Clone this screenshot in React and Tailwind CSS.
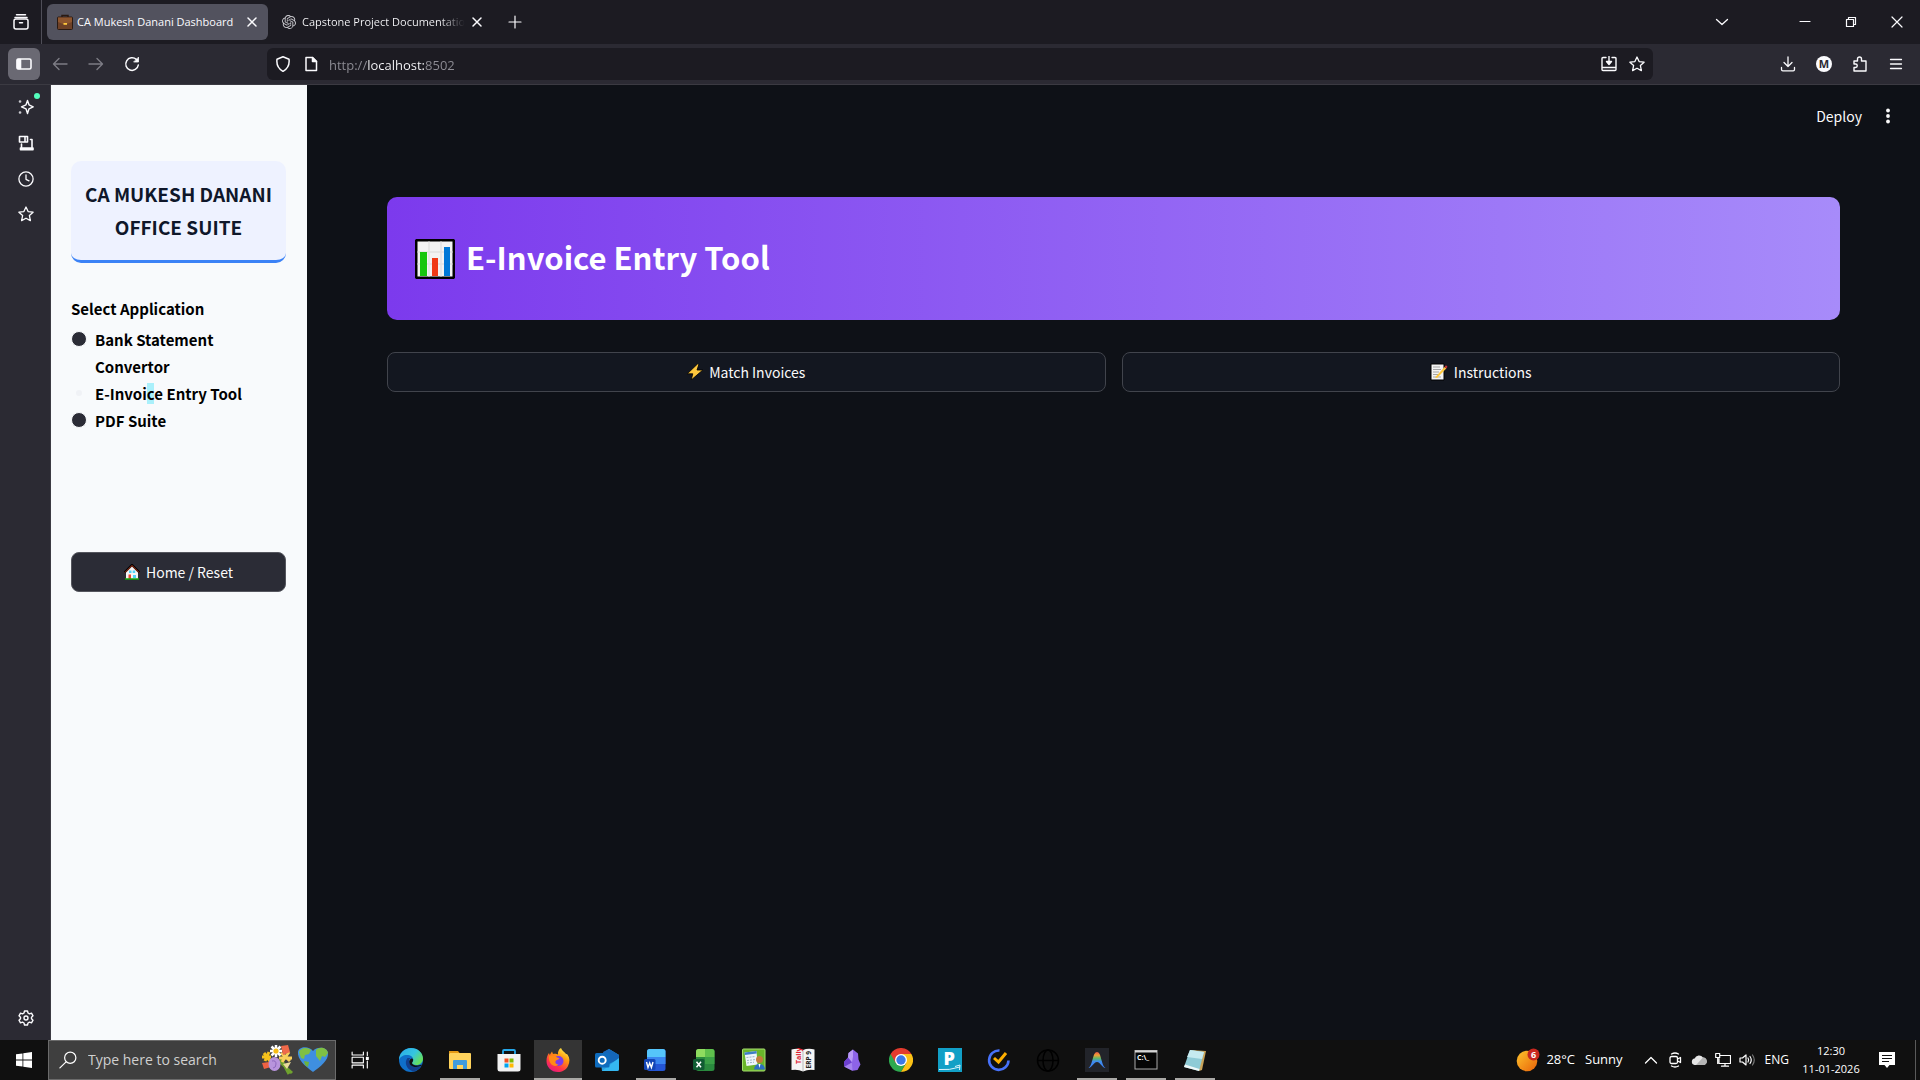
import React, { useState } from "react";
import { SiOpenai } from "react-icons/si";

// Thin 16px line icon used all over the browser chrome
const Line = ({ d, className = "size-4", width = 1.2, children }) => (
  <svg
    viewBox="0 0 16 16"
    fill="none"
    stroke="currentColor"
    strokeWidth={width}
    strokeLinecap="round"
    strokeLinejoin="round"
    className={`shrink-0 ${className}`}
    aria-hidden="true"
  >
    {d && <path d={d} />}
    {children}
  </svg>
);

const STAR = "M8 1l2.1 4.6 5 .6-3.7 3.4 1 5L8 12.2l-4.4 2.4 1-5L.9 6.2l5-.6z";
const CLOSE = "M4 4l8 8M12 4l-8 8";

/* ---------- page pictograms ---------- */

const ChartIcon = () => (
  <svg viewBox="0 0 40 40" className="size-10 shrink-0" aria-hidden="true">
    <rect x="1.2" y="1.2" width="37.6" height="37.6" rx="1" fill="#f3f3f3" stroke="#000" strokeWidth="2.6" />
    <path d="M2.5 13h35M2.5 25h35M14 2.5v35M26 2.5v35" stroke="#e2e2e2" strokeWidth="1.5" />
    <rect x="5" y="13" width="7" height="24" fill="#16c60c" />
    <rect x="17" y="19" width="6" height="18" fill="#f03a17" />
    <rect x="29" y="8" width="6" height="29" fill="#0078d7" />
  </svg>
);

const BoltIcon = () => (
  <svg viewBox="0 0 16 16" className="size-4 shrink-0" aria-hidden="true">
    <path d="M10.5 0L.3 9.8h5.5L4.2 16 15.8 6H10L12 0z" fill="#ffc83d" stroke="#000" strokeWidth=".8" />
  </svg>
);

const MemoIcon = () => (
  <svg viewBox="0 0 18 18" className="size-[18px] shrink-0" aria-hidden="true">
    <path d="M1 1h13v16H1z" fill="#f4f4f4" stroke="#000" />
    <path d="M3 4h7M3 6.5h8M3 9h6M3 11.5h5M3 14h8" stroke="#a5a5a5" strokeWidth="1" />
    <path d="M5 14.5L14.5 4l1.8 1.4L7 15z" fill="#ffc83d" />
    <path d="M14.5 4l1.5-1.7 1.5 1.5-1.2 1.6z" fill="#d13438" />
  </svg>
);

const HouseIcon = () => (
  <svg viewBox="0 0 16 16" className="size-4 shrink-0" aria-hidden="true">
    <path d="M2 8l6-6 6 6v7H2z" fill="#f4f4f4" />
    <path d="M.5 8.500L8 1l7.500 7.500" fill="none" stroke="#000" strokeWidth="2.2" />
    <path d="M1 8.500L8 1.500l7 7" fill="none" stroke="#c8401f" strokeWidth="1" />
    <rect x="5" y="6.500" width="2.500" height="2.500" fill="#4fd2f5" />
    <rect x="8.700" y="6.500" width="2.500" height="2.500" fill="#4fd2f5" />
    <rect x="4.500" y="10.500" width="2.500" height="4.500" fill="#e8452c" />
    <rect x="9" y="11" width="3" height="3" fill="#4fd2f5" />
    <path d="M1 15h14" stroke="#16a60c" strokeWidth="1.5" />
  </svg>
);

const BriefcaseIcon = () => (
  <svg viewBox="0 0 16 16" className="size-4 shrink-0" aria-hidden="true">
    <path d="M5 4V1.5h6V4" fill="none" stroke="#2a1a12" strokeWidth="1.5" />
    <rect x=".5" y="3" width="15" height="12.5" rx="1" fill="#6e4127" stroke="#2a1a12" />
    <path d="M1 3.5h14V8l-5 2H6L1 8z" fill="#8e562e" />
    <rect x="6.5" y="9" width="3.5" height="1.8" fill="#ffc83d" />
  </svg>
);

/* ---------- browser ---------- */

function TabBar() {
  return (
    <header className="flex h-11 items-center bg-[#1c1b22] text-[#fbfbfe]">
      <button aria-label="View tabs" className="flex h-11 w-[42px] items-center justify-center border-r border-[#4f4e58]">
        <Line width={1.5}>
          <path d="M3.5 .8h9M2 3.6h12" />
          <rect x="1" y="5" width="14" height="10" rx="2" />
          <path d="M6.5 8.8h3" />
        </Line>
      </button>
      <div className="ml-[5px] flex h-9 w-[221px] items-center rounded-md bg-[#52525e] pr-1 pl-2.5">
        <BriefcaseIcon />
        <span className="ml-1 flex-1 text-[11px] leading-5 whitespace-nowrap">CA Mukesh Danani Dashboard</span>
        <button aria-label="Close tab" className="flex size-6 items-center justify-center">
          <Line d={CLOSE} width={1.5} />
        </button>
      </div>
      <div className="ml-1 flex h-9 w-[221px] items-center pr-1 pl-2.5">
        <SiOpenai className="size-3.5 shrink-0 text-[#c9c9ce]" />
        <span className="ml-1.5 flex-1 overflow-hidden bg-gradient-to-r from-[#fbfbfe] from-85% to-[#1c1b22] bg-clip-text text-[11px] leading-5 whitespace-nowrap text-transparent">
          Capstone Project Documentation
        </span>
        <button aria-label="Close tab" className="flex size-6 items-center justify-center">
          <Line d={CLOSE} width={1.5} />
        </button>
      </div>
      <button aria-label="New tab" className="ml-1 flex size-9 items-center justify-center">
        <Line d="M8 2v12M2 8h12" />
      </button>
      <div className="ml-auto flex">
        <button aria-label="List all tabs" className="mr-9 flex h-11 w-12 items-center justify-center">
          <Line d="M2.5 5.5L8 10.5l5.500-5" width={1.3} />
        </button>
        <button aria-label="Minimize" className="flex h-11 w-[46px] items-center justify-center">
          <Line d="M3 7.5h10" />
        </button>
        <button aria-label="Restore" className="flex h-11 w-[46px] items-center justify-center">
          <Line d="M3.5 5.5h7v7h-7zM5.5 5V3.5h7v7h-1.5" />
        </button>
        <button aria-label="Close window" className="flex h-11 w-[46px] items-center justify-center">
          <Line d="M3 3l10 10M13 3L3 13" />
        </button>
      </div>
    </header>
  );
}

function Toolbar() {
  const [url, setUrl] = useState("http://localhost:8502");

  return (
    <div className="flex h-[41px] items-center border-b border-[#3b3a42] bg-[#2b2a33] px-2 text-[#fbfbfe]">
      <button aria-label="Show sidebar" className="flex size-8 items-center justify-center rounded-md bg-[#6a6973]">
        <Line width={1.6}>
          <rect x="1" y="3" width="14" height="10" rx="1.5" />
          <path d="M1.5 3.5h3v9h-3z" fill="currentColor" />
        </Line>
      </button>
      <div className="ml-1 flex gap-1">
        <button aria-label="Back" disabled className="flex size-8 items-center justify-center text-[#7d7c85]">
          <Line d="M15 8H1.5M7 2.5L1.5 8 7 13.5" width={1.4} />
        </button>
        <button aria-label="Forward" disabled className="flex size-8 items-center justify-center text-[#7d7c85]">
          <Line d="M1 8h13.5M9 2.5L14.5 8 9 13.5" width={1.4} />
        </button>
        <button aria-label="Reload" className="flex size-8 items-center justify-center">
          <Line width={1.5}>
            <path d="M12.300 3.400A6.300 6.300 0 1 0 14.300 9" />
            <path d="M14.500 1.500v4.500H10z" fill="currentColor" strokeWidth=".8" />
          </Line>
        </button>
      </div>
      <div className="ml-[119px] flex h-8 flex-1 items-center rounded-md bg-[#1c1b22] px-2">
        <Line d="M8 .8l6 2.4c.7 5.5-1 9.5-6 12.2C3 12.7 1.300 8.700 2 3.200z" width={1.5} />
        <Line className="ml-3 size-4" width={1.5}>
          <path d="M3 1.5h6.5L13.5 5.5V14.5H3z" />
          <path d="M9.5 1.5v4h4z" fill="currentColor" />
        </Line>
        {/* the host is brighter than the rest of the address */}
        <input
          aria-label="Address"
          value={url}
          onChange={(e) => setUrl(e.target.value)}
          className="ml-2.5 h-6 flex-1 bg-[linear-gradient(90deg,#8f8e96_38px,#fbfbfe_38px,#fbfbfe_96px,#8f8e96_96px)] bg-clip-text pt-0.5 text-[13px] text-transparent caret-white outline-none"
        />
        <Line className="mr-3 size-4" width={1.4}>
          <path d="M5 1.5H2q-1 0-1 1V13.5q0 1 1 1h12q1 0 1-1V2.5q0-1-1-1h-3M1 11.5h14M8 .5v6" />
          <path d="M5.500 5.500h5L8 8.500z" fill="currentColor" />
        </Line>
        <Line d={STAR} width={1.3} />
      </div>
      <div className="ml-[119px] flex gap-1">
        <button aria-label="Downloads" className="flex size-8 items-center justify-center">
          <Line d="M8 1v9.5M4 6.5l4 4 4-4M1.5 11.5v2q0 1.300 1.300 1.300h10.400q1.300 0 1.300-1.300v-2" width={1.3} />
        </button>
        <button aria-label="Account" className="flex size-8 items-center justify-center">
          <span className="flex size-4 items-center justify-center rounded-full bg-[#fbfbfe] text-[11px] font-bold text-[#2b2a33]">M</span>
        </button>
        <button aria-label="Extensions" className="flex size-8 items-center justify-center">
          <Line d="M2 5h3.5V3a2 2 0 0 1 4 0v2H14v10H2v-3.500h1.500a1.700 1.700 0 0 0 0-3.500H2z" width={1.4} />
        </button>
        <button aria-label="Menu" className="flex size-8 items-center justify-center">
          <Line d="M2.5 3.5h11M2.5 8h11M2.5 12.5h11" width={1.3} />
        </button>
      </div>
    </div>
  );
}

function ToolStrip() {
  return (
    <nav className="flex w-[51px] shrink-0 flex-col items-center border-r border-[#3b3a42] bg-[#2b2a33] pt-1 pb-1.5 pl-0.5 text-[#fbfbfe]">
      <button aria-label="AI chatbot" className="relative flex h-9 w-9 items-center justify-center">
        <Line width={1.4}>
          <path d="M9.5 1.5l1.5 4.300 4.200 2-4.200 2L9.500 14.500 8 9.800l-4.500-2L8 5.800z" />
          <path d="M2 2.5h.1M2 13.5h.1" strokeWidth="2.600" stroke="#c9c9ce" />
        </Line>
        <span className="absolute top-1 right-1 size-1.5 rounded-full bg-[#54ffbd]"></span>
      </button>
      <button aria-label="Synced tabs" className="flex h-9 w-9 items-center justify-center">
        <Line width={1.6}>
          <path d="M1.5 1.5h8v5.500h-8zM7 1.5v5M3.500 9v3.500M12.500 4.500h1.500v8" />
          <path d="M2.5 13h12.5v1.800H2.500z" fill="currentColor" />
        </Line>
      </button>
      <button aria-label="History" className="flex h-[35px] w-9 items-center justify-center">
        <Line width={1.3}>
          <circle cx="8" cy="8" r="7.1" />
          <path d="M8 4v4.300l3 1.500" />
        </Line>
      </button>
      <button aria-label="Bookmarks" className="flex h-[35px] w-9 items-center justify-center">
        <Line d={STAR} width={1.3} />
      </button>
      <button aria-label="Customize sidebar" className="mt-auto flex size-8 items-center justify-center">
        <Line width={1.4}>
          <path d="M6.5 1h3l.5 2 1.500.9 2-.7 1.500 2.600-1.500 1.400v1.600l1.500 1.400-1.500 2.600-2-.7-1.500.9-.5 2h-3L6 13l-1.500-.9-2 .7L1 10.200l1.500-1.400V7.200L1 5.800l1.500-2.600 2 .7L6 3z" />
          <circle cx="8" cy="8" r="2" />
        </Line>
      </button>
    </nav>
  );
}

/* ---------- streamlit page ---------- */

const apps = [
  { id: "bank", label: "Bank Statement Convertor" },
  {
    id: "einvoice",
    label: (
      <>
        E-Invoi<span className="bg-[#aaf0fb]">c</span>e Entry Tool
      </>
    ),
  },
  { id: "pdf", label: "PDF Suite" },
];

function AppSidebar() {
  const [selected, setSelected] = useState("einvoice");

  return (
    <aside className="w-64 shrink-0 bg-[#f8fafc] pt-19 pr-[21px] pl-5">
      <h2 className="rounded-[10px] border-b-[3px] border-[#3b82f6] bg-[#eef2ff] px-2 pt-4 pb-[17px] text-center text-[19px] leading-[33px] font-bold text-[#0f172a]">
        CA MUKESH DANANI OFFICE SUITE
      </h2>
      <fieldset className="mt-8 text-[15px] leading-[27px] font-bold text-black">
        <legend className="mb-1">Select Application</legend>
        {apps.map((app) => (
          <label key={app.id} className="flex items-start gap-2">
            <input
              type="radio"
              name="application"
              checked={selected === app.id}
              onChange={() => setSelected(app.id)}
              className="mt-[5px] size-4 shrink-0 appearance-none rounded-full border border-[#f8fafc] bg-[#2b2c36] checked:border-5 checked:bg-[#f0f2f6]"
            />
            <span>{app.label}</span>
          </label>
        ))}
      </fieldset>
      <button
        onClick={() => setSelected("bank")}
        className="mt-[118px] flex h-10 w-full items-center justify-center gap-1.5 rounded-lg border border-[#55565e] bg-[#2b2c36] text-sm text-[#fafafa]"
      >
        <HouseIcon />
        Home / Reset
      </button>
    </aside>
  );
}

function AppMain() {
  return (
    <main className="flex-1 bg-[#0e1117] px-20 text-[#fafafa]">
      <div className="-mr-15 flex h-[62px] items-center justify-end gap-3.5">
        <button className="text-sm">Deploy</button>
        <button aria-label="More options" className="flex size-6 items-center justify-center">
          <svg viewBox="0 0 16 16" fill="currentColor" className="size-4" aria-hidden="true">
            <circle cx="8" cy="2.5" r="1.9" />
            <circle cx="8" cy="8" r="1.9" />
            <circle cx="8" cy="13.5" r="1.9" />
          </svg>
        </button>
      </div>
      <div className="mt-[50px] flex h-[123px] items-center gap-[11px] rounded-[10px] bg-[linear-gradient(90deg,#7c3aed,#a78bfa)] px-7">
        <ChartIcon />
        <h1 className="pb-1 text-[31px] leading-10 font-semibold text-white">E-Invoice Entry Tool</h1>
      </div>
      <div className="mt-8 grid grid-cols-2 gap-4">
        <button className="flex h-10 items-center justify-center gap-1.5 rounded-lg border border-[#41444c] bg-[#131720] text-sm">
          <BoltIcon />
          Match Invoices
        </button>
        <button className="flex h-10 items-center justify-center gap-1.5 rounded-lg border border-[#41444c] bg-[#131720] text-sm">
          <MemoIcon />
          Instructions
        </button>
      </div>
    </main>
  );
}

/* ---------- taskbar ---------- */

const Logo = ({ children }) => (
  <svg viewBox="0 0 24 24" className="size-6" aria-hidden="true">
    {children}
  </svg>
);

const EdgeLogo = () => (
  <Logo>
    <defs>
      <linearGradient id="edgeTop" x1="0" y1="0" x2="1" y2=".6">
        <stop offset="0" stopColor="#2aa9e8" />
        <stop offset=".6" stopColor="#35c5e0" />
        <stop offset="1" stopColor="#66e05a" />
      </linearGradient>
    </defs>
    <circle cx="12" cy="12" r="12" fill="#0f6fc9" />
    <path d="M0 12C0 5 5.5 0 12 0c7 0 12 5 12 10.5 0 4-3 6.5-6.5 6.5-3 0-4.5-1-4.5-2 0-.8 1.2-1.2 1.2-3.2C14.2 9 11.5 7 8 7c-4 0-7 2-8 5z" fill="url(#edgeTop)" />
    <path d="M8.5 10C5 14 7 21 14 23.5c4-.6 7-3 8.5-6-6 3-12 1-12.500-4-.1-1.500.3-2.500 1.500-3.500z" fill="#123f8c" />
    <path d="M12.5 10.5c-1.800.8-2.500 2.500-2.200 4 .6 4.500 7.200 5.800 12.400 3.100.6-.4.200-1-.4-.8-4 1.700-9.300.4-9.300-1.800 0-.8 1.200-1.200 1.200-3.200 0-.8-.7-1.700-1.700-1.300z" fill="#101010" />
  </Logo>
);

const FolderLogo = () => (
  <Logo>
    <path d="M1 3h9l2 2.5H1z" fill="#e59a14" />
    <rect x="1" y="5" width="22" height="16" rx="1" fill="#ffd35c" />
    <path d="M5 21v-8q0-1 1-1h12q1 0 1 1v8h-4v-4H9v4z" fill="#3f9bdc" />
  </Logo>
);

const StoreLogo = () => (
  <Logo>
    <path d="M6 8V3q0-1 1-1h10q1 0 1 1v5" fill="none" stroke="#25a7e8" strokeWidth="1.8" />
    <path d="M.5 6h23v15q0 2.5-2.5 2.5H3Q.5 23.5.5 21z" fill="#f2f2f2" />
    <path d="M7.5 10.5h4v4h-4z" fill="#f25022" />
    <path d="M12.5 10.5h4v4h-4z" fill="#7fba00" />
    <path d="M7.5 15.5h4v4h-4z" fill="#00a4ef" />
    <path d="M12.5 15.5h4v4h-4z" fill="#ffb900" />
  </Logo>
);

const FirefoxLogo = () => (
  <Logo>
    <defs>
      <linearGradient id="fox" x1=".8" y1="0" x2=".2" y2="1">
        <stop offset="0" stopColor="#fff44f" />
        <stop offset=".35" stopColor="#ff980e" />
        <stop offset=".7" stopColor="#ff3647" />
        <stop offset="1" stopColor="#e31587" />
      </linearGradient>
    </defs>
    <path d="M15 0c1 3 4 4 5 6 1 0 1 .5 1.5.5C24 10 24 14 22 18c-2 4-6 6-10 6C5 24 .5 19 .5 13c0-3.500 1-6 2.500-8l.7 2L6 3.500 7 6c2-.5 4 0 5 .5C11.500 4 13 1 15 0z" fill="url(#fox)" />
    <circle cx="12.5" cy="13" r="5" fill="#7a3bea" />
    <path d="M3 8c3-1.500 6-1 8 1.500l2.500.8c-1 1.700-3 1.200-4 3-.6 2 1 3.500 3 3-1.500 2.500-6 2-8-1C3 13 2.500 10 3 8z" fill="#ff8a16" />
  </Logo>
);

const OutlookLogo = () => (
  <Logo>
    <path d="M5 7l9-6 10 6v14q0 2-2 2H7z" fill="#2aa0e0" />
    <path d="M8 4l6-3 10 6v4L12 17z" fill="#1466b8" />
    <path d="M24 10v11q0 2-2 2H7z" fill="#35b8f1" />
    <rect y="5" width="14.5" height="14.5" rx="1.5" fill="#0f6cbd" />
    <circle cx="7.2" cy="12.2" r="3.5" fill="none" stroke="#fff" strokeWidth="1.9" />
  </Logo>
);

const WordLogo = () => (
  <Logo>
    <rect x="3" y="1" width="18.5" height="22" rx="2.5" fill="#2456d6" />
    <path d="M3 9V3.500Q3 1 5.500 1H19q2.500 0 2.500 2.500V9z" fill="#55c5fa" />
    <path d="M3 9h18.500v7H3z" fill="#3a86f0" />
    <rect x="0" y="11" width="11.5" height="11" rx="1.5" fill="#1345b5" />
    <path d="M2.500 14l1.500 5.500L5.700 15l1.700 4.500L9 14" fill="none" stroke="#fff" strokeWidth="1.4" />
  </Logo>
);

const ExcelLogo = () => (
  <Logo>
    <rect x="3" y="1" width="18.5" height="22" rx="2.5" fill="#2a8a3e" />
    <path d="M3 9V3.500Q3 1 5.500 1H12v8z" fill="#8fdc5f" />
    <path d="M12 1h7q2.500 0 2.500 2.500V9H12z" fill="#5fc04c" />
    <path d="M12 9h9.500v7H12z" fill="#3aa046" />
    <rect x="0" y="11" width="11.5" height="11" rx="1.5" fill="#115c33" />
    <path d="M3.500 13.800l4.500 5.500M8 13.800l-4.500 5.500" stroke="#fff" strokeWidth="1.5" />
  </Logo>
);

const PlannerLogo = () => (
  <Logo>
    <rect x=".5" y="1" width="22.5" height="22" rx="1" fill="#69b52b" stroke="#a7e06f" />
    <path d="M2.500 4.500l12-1.500 1 13.500-11 1.500z" fill="#eef6fb" />
    <path d="M2.500 4.500l12-1.500.2 2.500-12 1.500z" fill="#3d7fc4" />
    <path d="M4.500 9.500l9-1M5 12.500l9-1M5 15l7-.8" stroke="#9fb4c6" strokeDasharray="2 1" />
    <circle cx="17.5" cy="11.500" r="3.500" fill="#c47a3b" />
    <path d="M12 21.500q.5-5.500 5.500-5.500t5.500 5.500z" fill="#2c6fc2" />
    <path d="M16.500 16h2l-1 4z" fill="#fff" />
  </Logo>
);

const TallyLogo = () => (
  <Logo>
    <path d="M.5 1.500Q7 0 12 2q5-2 11.500-.5V22Q17 21 12 23.500 7 21 .5 22z" fill="#f5f5f5" />
    <path d="M12 2v21" stroke="#b9b9b9" />
    <text transform="translate(9.5 16) rotate(-90)" fontSize="7" fontWeight="700" fill="#e0202f">Tally</text>
    <text transform="translate(20 20.5) rotate(-90)" fontSize="6.5" fontWeight="700" fill="#222">ERP 9</text>
  </Logo>
);

const GemLogo = () => (
  <Logo>
    <path d="M13 1.500l5 4 .5 6 2 5-3 5.500-5 .8-8-4L4 14l4-4.500.5-4.500z" fill="#8d63e8" />
    <path d="M13 1.500L8.500 5 8 9.500l4 5 1-6z" fill="#b99af5" />
    <path d="M4 14l4-4.500 4 5L4.500 19z" fill="#6c3fd0" />
    <path d="M12 14.500l.5 8.300-8-4z" fill="#a583ef" />
  </Logo>
);

const ChromeLogo = () => (
  <Logo>
    <path d="M1.600 6A12 12 0 0 0 12 24l5.200-9L12 12z" fill="#2da94f" />
    <path d="M12 6h10.400A12 12 0 0 0 1.600 6l5.200 9z" fill="#e33b2e" />
    <path d="M22.400 6H12l5.200 9L12 24A12 12 0 0 0 22.400 6z" fill="#fbc116" />
    <circle cx="12" cy="12" r="6" fill="#fff" />
    <circle cx="12" cy="12" r="4.7" fill="#3b78e7" />
  </Logo>
);

const PLogo = () => (
  <Logo>
    <rect width="24" height="24" fill="#12a0c6" />
    <text x="5.5" y="16.5" fontSize="18" fontWeight="800" fill="#fff">P</text>
    <path d="M1 21.500q10 1 21-2.500M17 18.500l5-1.500-.5 5" fill="none" stroke="#d8f4fb" />
  </Logo>
);

const TickLogo = () => (
  <Logo>
    <path d="M12.500 2.500a9.700 9.700 0 1 0 9 10" fill="none" stroke="#4772fa" strokeWidth="2.6" />
    <path d="M7 10l4.500 4L19 5" fill="none" stroke="#ffb000" strokeWidth="3" />
  </Logo>
);

const GlobeLogo = () => (
  <Logo>
    <g fill="none" stroke="#000" strokeWidth="1.5">
      <circle cx="12" cy="12.5" r="10.5" />
      <ellipse cx="12" cy="12.5" rx="5" ry="10.5" />
      <path d="M1.5 12.5h21" />
    </g>
  </Logo>
);

const ArcLogo = () => (
  <Logo>
    <defs>
      <linearGradient id="arc" x1="0" y1="1" x2="0" y2="0">
        <stop offset="0" stopColor="#3a7df0" />
        <stop offset=".4" stopColor="#3f8cf0" />
        <stop offset=".6" stopColor="#5bb86a" />
        <stop offset=".8" stopColor="#f0a035" />
        <stop offset="1" stopColor="#e8574a" />
      </linearGradient>
    </defs>
    <rect width="24" height="24" fill="#22242a" />
    <path d="M3.500 20C8 17 7.500 4 12 4s4 13 8.500 16c-3.500 0-5-6-8.500-6S7 20 3.500 20z" fill="url(#arc)" />
  </Logo>
);

const CmdLogo = () => (
  <Logo>
    <rect x="1" y="2.5" width="22" height="18.5" fill="#050505" stroke="#a9a9a9" />
    <path d="M1 3.500h22" stroke="#d5d5d5" strokeWidth="2" />
    <text x="3" y="12" fontSize="7" fontWeight="700" fill="#fff">C:\_</text>
  </Logo>
);

const NotepadLogo = () => (
  <Logo>
    <path d="M8 2l15 1-4 19-3 1z" fill="#c9a45a" />
    <path d="M7 2l14 2-5 19-15-4z" fill="#8ecbd6" />
    <path d="M7 2l14 2-2 7L4 9z" fill="#c6ebf0" />
    <path d="M1 19l15 4 .5-2L2 16.500z" fill="#eef7f8" />
  </Logo>
);

const taskApps = [
  { name: "Edge", Icon: EdgeLogo },
  { name: "File Explorer", Icon: FolderLogo, open: true },
  { name: "Store", Icon: StoreLogo },
  { name: "Firefox", Icon: FirefoxLogo, active: true },
  { name: "Outlook", Icon: OutlookLogo },
  { name: "Word", Icon: WordLogo, open: true },
  { name: "Excel", Icon: ExcelLogo },
  { name: "Planner", Icon: PlannerLogo },
  { name: "Tally", Icon: TallyLogo },
  { name: "Obsidian", Icon: GemLogo },
  { name: "Chrome", Icon: ChromeLogo },
  { name: "P", Icon: PLogo },
  { name: "TickTick", Icon: TickLogo },
  { name: "Globe", Icon: GlobeLogo },
  { name: "Antigravity", Icon: ArcLogo, open: true },
  { name: "Command Prompt", Icon: CmdLogo, open: true },
  { name: "Notepad", Icon: NotepadLogo, open: true },
];

const SearchArt = () => (
  <svg viewBox="0 0 68 32" className="h-8 w-[68px] shrink-0" aria-hidden="true">
    <path d="M18 17l13 12M20 15l8 15" stroke="#6fa22e" strokeWidth="3" />
    <path d="M22 20l8-2-4 7z" fill="#e8dc9a" />
    <g stroke="#f6c21c" strokeWidth="3">
      <path d="M1 13h9M3 9l6 8M8 8l-4 9" />
      <path d="M18 14h13M20 9l9 8M28 8l-7 10" stroke="#f8cf5b" />
    </g>
    <path d="M20 2l7-1 2 7-7 3z" fill="#f0694a" />
    <path d="M1 19l7-1 2 5-7 2z" fill="#ee6244" />
    <g stroke="#fff" strokeWidth="2.5">
      <path d="M9 7h12M15 1v12M10.500 2.500l9 9M19.500 2.500l-9 9" />
    </g>
    <circle cx="15" cy="7" r="2.6" fill="#f7bd17" />
    <ellipse cx="13.5" cy="20" rx="6" ry="7" fill="#b894dc" />
    <path d="M11 17q4-1 4 3t-3 4" fill="none" stroke="#8e68bd" />
    <path d="M52 28C44 22 36 15 37 8c1-6 11-6 15-1 4-5 14-4 15 2 1 7-8 14-15 19z" fill="#3f8fe0" />
    <path d="M38 8c2-5 9-5 12-2l-2 4-4 1-1 4-3-1z" fill="#7fc043" />
    <path d="M55 6c4-4 11-2 12 3l-3 4-3-1-2 5-4-5z" fill="#7fc043" />
    <path d="M43 17l5 1-1 5-3-2z" fill="#6cb33c" />
  </svg>
);

function Taskbar() {
  return (
    <footer className="flex h-10 items-stretch bg-[#101010] text-white">
      <button aria-label="Start" className="flex w-12 items-center justify-center">
        <svg viewBox="0 0 16 16" fill="currentColor" className="size-4" aria-hidden="true">
          <path d="M0 2.300L6.500 1.400V7.600H0zM7.300 1.300L16 0V7.600H7.300zM0 8.400H6.500V14.600L0 13.700zM7.300 8.400H16V16L7.300 14.700z" />
        </svg>
      </button>
      <label className="flex w-72 items-center border border-[#6b6b6b] bg-[#3f3f3f] pr-1.5 pl-2.5">
        <span className="sr-only">Search</span>
        <Line className="size-[18px]" width={1.1}>
          <circle cx="10" cy="6" r="5" />
          <path d="M6.300 9.700L.8 15" />
        </Line>
        <input
          type="text"
          placeholder="Type here to search"
          className="ml-[11px] w-0 flex-1 bg-transparent text-sm outline-none placeholder:text-[#d0d0d0]"
        />
        <SearchArt />
      </label>
      <button aria-label="Task view" className="flex w-[51px] items-center justify-center pr-1">
        <Line className="size-[18px]" width={1}>
          <path d="M1 1v2.500h10V1M1 5.500h10v5H1zM1 15v-2.500h10V15M14.500 1v3M14.500 9v6" />
          <path d="M13.700 5.500h1.600v2h-1.600z" fill="currentColor" />
        </Line>
      </button>
      <div className="flex gap-px">
        {taskApps.map(({ name, Icon, open, active }) => (
          <button
            key={name}
            aria-label={name}
            className={`relative flex w-12 items-center justify-center ${active ? "bg-[#343434]" : ""}`}
          >
            <Icon />
            {(open || active) && (
              <span className={`absolute bottom-0 h-0.5 bg-[#aaa9a6] ${active ? "inset-x-0" : "inset-x-1"}`}></span>
            )}
          </button>
        ))}
      </div>
      <div className="ml-auto flex items-center">
        <button className="flex items-center text-[13px]">
          <svg viewBox="0 0 24 24" className="size-6" aria-hidden="true">
            <defs>
              <linearGradient id="sun" x1="0" y1="0" x2="1" y2="1">
                <stop offset="0" stopColor="#ffc42b" />
                <stop offset="1" stopColor="#e8630a" />
              </linearGradient>
            </defs>
            <circle cx="11" cy="13" r="10.300" fill="url(#sun)" />
            <circle cx="17.500" cy="6.500" r="6" fill="#c8281f" />
            <text x="17.500" y="9.800" textAnchor="middle" fontSize="9" fontWeight="700" fill="#fff">6</text>
          </svg>
          <span className="ml-1.5">28°C</span>
          <span className="ml-2.5">Sunny</span>
        </button>
        <div className="ml-5 flex items-center gap-2">
          <Line d="M2.5 11L8 5.500l5.500 5.500" width={1.3} />
          <Line width={1.3}>
            <rect x="3" y="4.5" width="7.5" height="7" rx="1.5" />
            <path d="M10.500 7l3-1.500v5l-3-1.500M4.500 2q3.500-2 7 0M4.500 14q3.500 2 7 0" />
          </Line>
          <svg viewBox="0 0 16 16" className="size-4" aria-hidden="true">
            <path d="M3.500 13A3.300 3.300 0 0 1 3.600 6.500 4.800 4.800 0 0 1 12 5.500a3.800 3.800 0 0 1 .8 7.500z" fill="#e6e6e6" />
            <path d="M5 13l7-7.500a3.800 3.800 0 0 1 .8 7.500z" fill="#b5b5b5" />
          </svg>
          <Line width={1.2}>
            <path d="M5.500 3.500h10v8H4v-5M10 11.500V14M6.500 14.200h7M.7 1.500h4v4h-4zM2.700 5.500v6" />
          </Line>
          <Line width={1.2}>
            <path d="M1 6h2.500L7 3v10L3.500 10H1zM9 6q1.300 2 0 4M11 4.500q2.500 3.500 0 7" />
            <path d="M13.500 3q3.500 5 0 10" stroke="#777" />
          </Line>
        </div>
        <span className="ml-2.5 text-xs">ENG</span>
        <div className="ml-3 w-[60px] text-center text-[11px] leading-[18px] whitespace-nowrap">
          <div>12:30</div>
          <div>11-01-2026</div>
        </div>
        <button aria-label="Notifications" className="ml-4 flex w-5 items-center justify-center">
          <svg viewBox="0 0 16 16" className="size-4" aria-hidden="true">
            <path d="M0 0h16v13h-5.500L8 16l-2.500-3H0z" fill="#fff" />
            <path d="M3 3.500h10M3 6.500h10M3 9.500h7" stroke="#101010" />
          </svg>
        </button>
        <span className="ml-[18px] h-10 w-[5px] border-l border-[#5a5a5a]"></span>
      </div>
    </footer>
  );
}

function App() {
  return (
    <div className="flex min-h-screen flex-col font-['Open_Sans',sans-serif]">
      <TabBar />
      <Toolbar />
      <div className="flex flex-1 bg-[#0e1117]">
        <ToolStrip />
        <div className="flex flex-1 font-['Noto_Sans_CJK_SC',sans-serif]">
          <AppSidebar />
          <AppMain />
        </div>
      </div>
      <Taskbar />
    </div>
  );
}

export default App;
